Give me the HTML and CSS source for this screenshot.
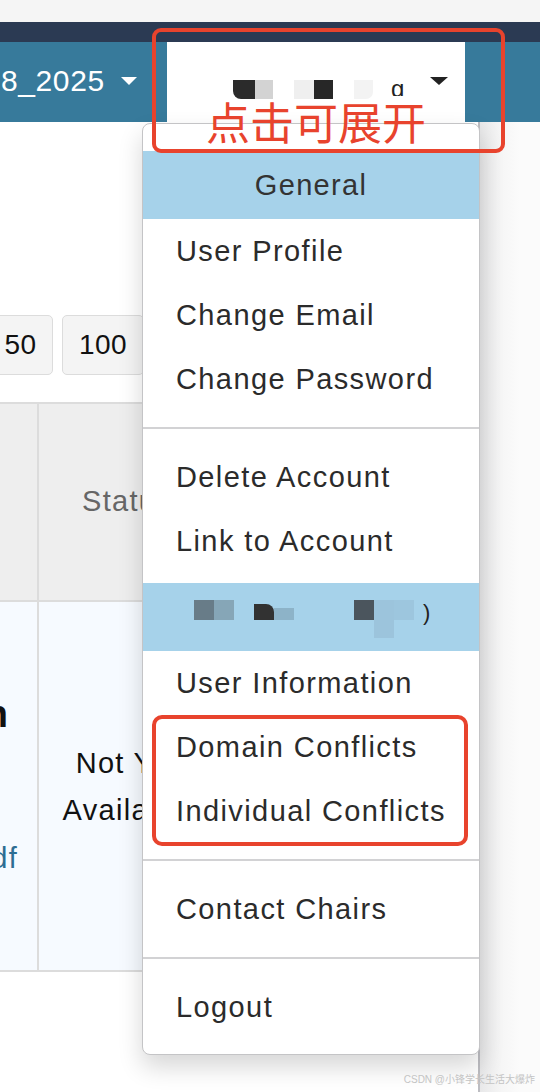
FILE: index.html
```html
<!DOCTYPE html>
<html lang="zh">
<head>
<meta charset="utf-8">
<title>Account menu</title>
<link rel="stylesheet" href="styles.css">
</head>
<body>
<div class="topstrip"></div>
<div class="darkbar"></div>
<nav class="navbar">
  <div class="nav-left">
    <span class="conf">8_2025</span>
    <span class="caret caret-white"></span>
  </div>
  <div class="user-box">
    <span class="mk mk1"></span>
    <span class="mk mk2"></span>
    <span class="blk b-dark b-round-l"></span>
    <span class="blk b-grey"></span>
    <span class="blk b-light b-gap"></span>
    <span class="blk b-dark2"></span>
    <span class="blk b-light2 b-gap b-round-r"></span>
    <span class="mk mk3"></span>
    <span class="frag-g">g</span>
    <span class="caret caret-dark"></span>
  </div>
  <div class="nav-rest"></div>
</nav>
<div class="main">
  <div class="content">
    <div class="pager">
      <button class="pg pg-50">50</button>
      <button class="pg pg-100">100</button>
    </div>
    <div class="table">
      <div class="row head">
        <div class="cell c1"></div>
        <div class="cell c2 th">Status</div>
        <div class="cell c3"></div>
      </div>
      <div class="row body">
        <div class="cell c1 clip">
          <div class="line title-line"><b>Design</b></div>
          <div class="line"></div>
          <div class="line"></div>
          <div class="line link-line"><a class="pdf">paper.pdf</a></div>
        </div>
        <div class="cell c2 status">Not Yet<br>Available</div>
        <div class="cell c3"></div>
      </div>
    </div>
  </div>
  <div class="side"></div>
</div>

<div class="dropdown">
  <div class="dd-header">General</div>
  <div class="dd-item">User Profile</div>
  <div class="dd-item">Change Email</div>
  <div class="dd-item">Change Password</div>
  <div class="dd-divider"></div>
  <div class="dd-item">Delete Account</div>
  <div class="dd-item">Link to Account</div>
  <div class="dd-header dd-header-2">
    <span class="px px-a1"></span><span class="px px-a2"></span>
    <span class="px px-b1"></span><span class="px px-b2"></span>
    <span class="px px-c1"></span><span class="px px-c2"></span><span class="px px-c3"></span>
    <span class="px-paren">)</span>
  </div>
  <div class="dd-item">User Information</div>
  <div class="dd-item">Domain Conflicts</div>
  <div class="dd-item">Individual Conflicts</div>
  <div class="dd-divider"></div>
  <div class="dd-item">Contact Chairs</div>
  <div class="dd-divider"></div>
  <div class="dd-item">Logout</div>
</div>

<div class="annot annot-1"><span class="annot-text">点击可展开</span></div>
<div class="annot annot-2"></div>
<div class="watermark">CSDN @小锋学长生活大爆炸</div>
</body>
</html>
```
FILE: styles.css
```css
* { box-sizing: border-box; }
html, body { margin: 0; padding: 0; }
body {
  width: 540px;
  height: 1092px;
  overflow: hidden;
  position: relative;
  background: #fff;
  font-family: "Liberation Sans", Arial, "Noto Sans CJK SC", sans-serif;
  color: #2b2b2b;
}

.topstrip { height: 22px; background: #f5f5f5; }
.darkbar { height: 20px; background: #2b3a53; }

.navbar { height: 80px; background: #377a9b; display: flex; }
.nav-left {
  width: 167px;
  display: flex;
  align-items: center;
  padding-left: 1px;
  padding-bottom: 2px;
}
.conf { color: #fff; font-size: 30px; line-height: 1; letter-spacing: 0.6px; }
.caret {
  width: 0; height: 0;
  border-left: 8px solid transparent;
  border-right: 8px solid transparent;
}
.caret-white { border-top: 8px solid #fff; margin-left: 16px; }

.user-box {
  width: 298px;
  background: #fff;
  display: flex;
  align-items: flex-start;
  padding-top: 35px;
  padding-left: 36px;
}
.mk { display: block; background: #3a3a3a; height: 2px; }
.mk1 { width: 4px; margin-top: 57px; }
.mk2 { width: 8px; margin-top: 55px; margin-left: 6px; }
.mk3 { width: 6px; margin-top: 56px; margin-left: 6px; }
.blk { display: block; height: 19px; margin-top: 3px; }
.b-dark { width: 22px; background: #2b2b2b; margin-left: 12px; }
.b-round-l { border-radius: 0 0 0 8px; }
.b-grey { width: 18px; background: #d3d3d3; }
.b-light { width: 20px; background: #efefef; }
.b-gap { margin-left: 21px; }
.b-dark2 { width: 19px; background: #272727; }
.b-light2 { width: 19px; background: #f3f3f3; }
.b-round-r { border-radius: 0 0 7px 0; }
.frag-g {
  display: block;
  font-size: 24px;
  line-height: 14px;
  height: 14px;
  color: #222;
  margin-left: 6px;
  margin-top: 5px;
  overflow: hidden;
}
.caret-dark {
  border-left-width: 9px;
  border-right-width: 9px;
  border-top: 8px solid #222;
  margin-left: auto;
  margin-right: 17px;
}
.nav-rest { flex: 1; }

.main { display: flex; min-height: 970px; }
.content { width: 478px; }
.side {
  flex: 1;
  border-left: 2px solid #bdbdc2;
  background: linear-gradient(to right, #e8e8e9, #f6f6f6 22px, #fbfbfb 40px);
}

.pager { display: flex; gap: 9px; margin-top: 193px; margin-left: -18px; }
.pg {
  height: 60px;
  border: 1px solid #dcdcdc;
  border-radius: 5px;
  background: #f4f4f4;
  font-family: "Liberation Sans", Arial, sans-serif;
  font-size: 28px;
  letter-spacing: 0.5px;
  color: #111;
  padding: 0;
}
.pg-50 { width: 71px; padding-left: 6px; }
.pg-100 { width: 82px; }

.table { margin-top: 27px; border-top: 2px solid #dcdcdc; }
.row { display: flex; border-bottom: 2px solid #dcdcdc; }
.row.head { height: 198px; background: #eeeeee; }
.row.body { height: 370px; background: #f6faff; }
.cell { border-right: 2px solid #dcdcdc; }
.c1 { width: 39px; }
.c2 { width: 178px; }
.c3 { flex: 1; border-right: 0; }
.th {
  display: flex; align-items: center; justify-content: center;
  font-size: 29px; letter-spacing: 1.3px; color: #666;
  padding-bottom: 2px;
}
.clip {
  overflow: hidden;
  display: flex;
  flex-direction: column;
  justify-content: center;
}
.line {
  height: 48px;
  display: flex;
  justify-content: flex-end;
  align-items: center;
  white-space: nowrap;
}
.title-line { padding-right: 29px; font-size: 38px; color: #111; }
.link-line { padding-right: 19px; font-size: 29px; letter-spacing: 1.3px; }
.pdf { color: #2d6d93; }
.status {
  display: flex; align-items: center; justify-content: center;
  text-align: center;
  font-size: 29px; letter-spacing: 1.3px; line-height: 47px; color: #111;
  padding-top: 2px;
}

.dropdown {
  position: absolute;
  top: 123px;
  left: 142px;
  width: 338px;
  height: 932px;
  background: #fff;
  border: 1px solid #c4c4c6;
  border-radius: 8px;
  padding: 27px 0 15px;
  box-shadow: 0 12px 24px rgba(0,0,0,0.16);
  z-index: 5;
}
.dd-header {
  height: 68px;
  background: #a6d2ea;
  text-align: center;
  font-size: 29px;
  letter-spacing: 1.3px;
  line-height: 68px;
  color: #333;
}
.dd-item {
  height: 64px;
  line-height: 64px;
  padding-left: 33px;
  font-size: 29px;
  letter-spacing: 1.4px;
  color: #2b2b2b;
  white-space: nowrap;
}
.dd-divider { height: 2px; background: #d2d2d4; margin: 16px 0; }

.dd-header-2 {
  margin-top: 10px;
  display: flex;
  align-items: flex-start;
  padding: 17px 0 0 51px;
  text-align: left;
  line-height: 1;
  letter-spacing: 0;
}
.px { display: block; width: 20px; height: 20px; }
.px-a1 { background: #687c88; }
.px-a2 { background: #86a6b7; }
.px-b1 { background: #323232; margin-left: 20px; margin-top: 4px; height: 16px; border-radius: 0 8px 0 0; }
.px-b2 { background: #8db3c8; margin-top: 8px; height: 12px; }
.px-c1 { background: #4b555d; margin-left: 60px; }
.px-c2 { background: #9cc4dc; height: 38px; }
.px-c3 { background: #9dc6de; }
.px-paren { font-size: 22px; color: #222; margin-left: 9px; margin-top: 2px; }

.annot {
  position: absolute;
  border: 4px solid #e8432d;
  z-index: 10;
}
.annot-1 {
  left: 152px; top: 28px;
  width: 353px; height: 125px;
  border-radius: 9px;
}
.annot-text {
  position: absolute;
  left: 50px;
  top: 67px;
  font-family: "Noto Sans CJK SC", sans-serif;
  font-size: 44px;
  line-height: 44px;
  color: #e8432d;
  white-space: nowrap;
}
.annot-2 {
  left: 152px; top: 715px;
  width: 316px; height: 131px;
  border-radius: 10px;
}

.watermark {
  position: absolute;
  right: 5px;
  bottom: 6px;
  font-family: "Liberation Sans", "Noto Sans CJK SC", sans-serif;
  font-size: 10px;
  color: #c4c4c4;
  z-index: 12;
}
```
